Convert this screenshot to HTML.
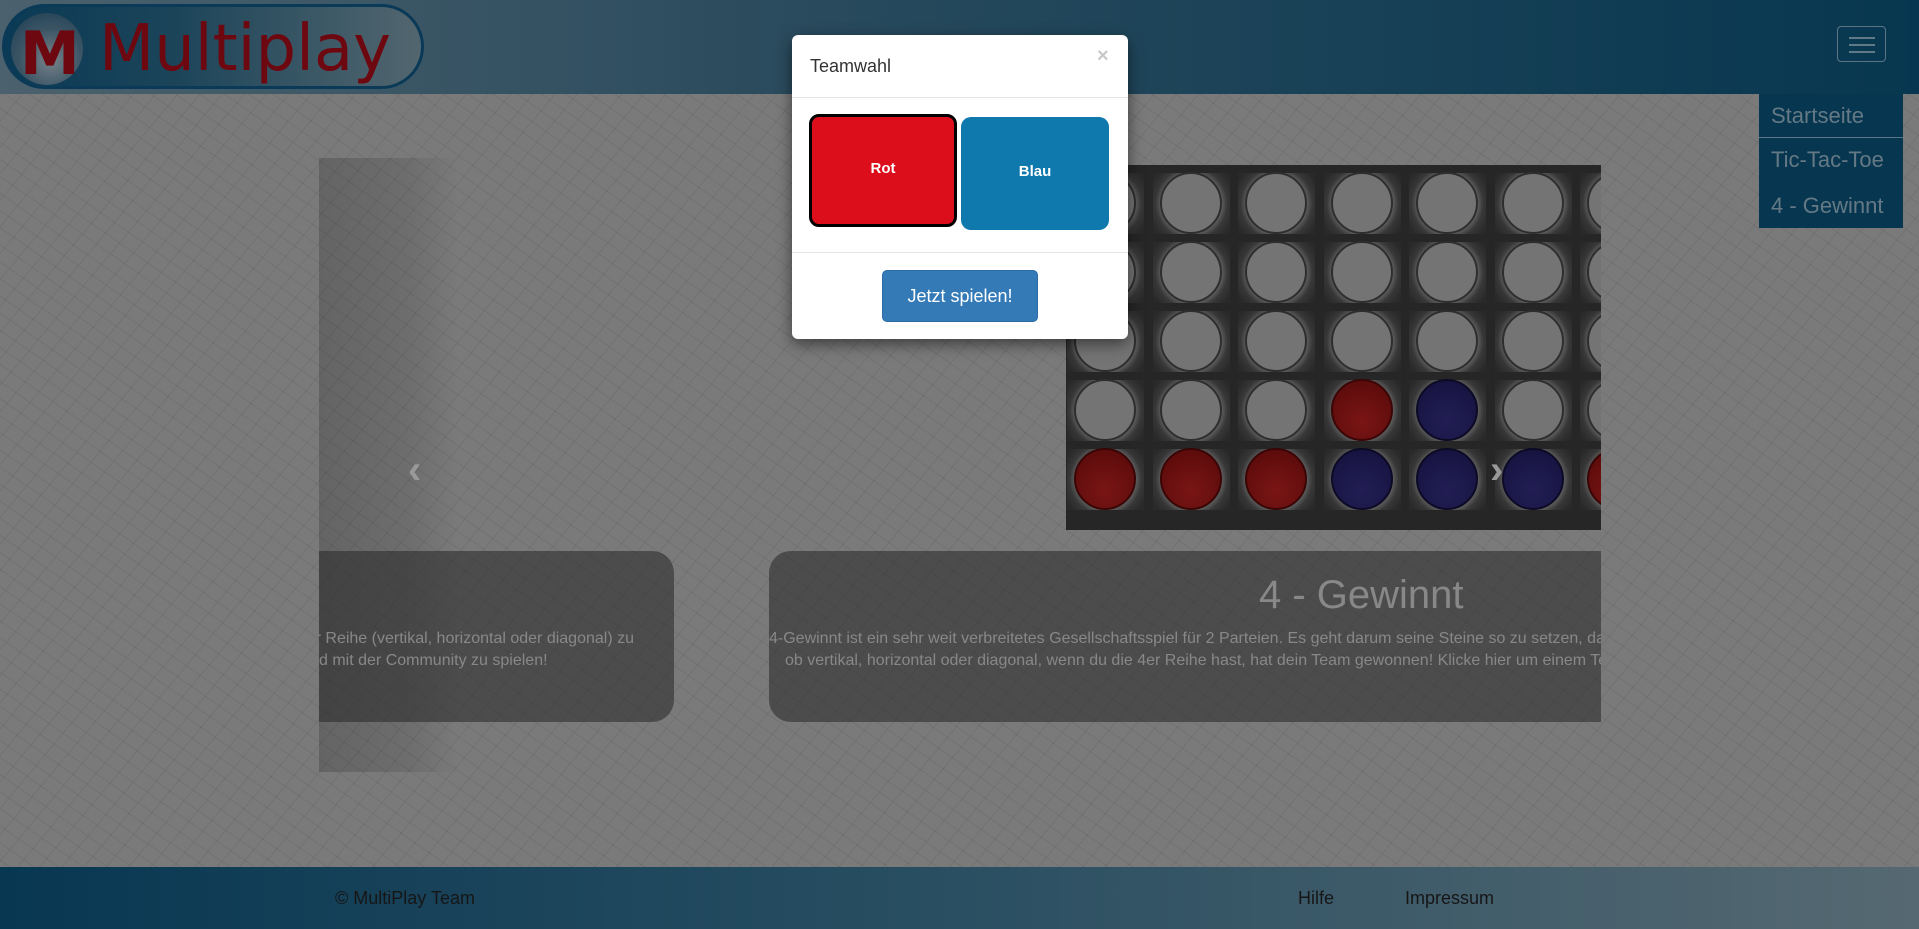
<!DOCTYPE html>
<html><head><meta charset="utf-8"><style>
*{margin:0;padding:0;box-sizing:border-box}
body{width:1919px;height:929px;overflow:hidden;position:relative;font-family:"Liberation Sans",Arial,sans-serif;background:#7a7a7a;
background-image:repeating-linear-gradient(35deg,rgba(0,0,0,.07) 0 1px,transparent 1px 14px),repeating-linear-gradient(-50deg,rgba(0,0,0,.07) 0 1px,transparent 1px 17px);}
.a{position:absolute}
#hdr{left:0;top:0;width:1919px;height:94px;background:linear-gradient(90deg,#4b616d 0%,#27495c 45%,#073750 100%)}
#logo{left:2px;top:4px;width:422px;height:85px;border:3px solid #0a3a57;border-radius:43px;background:linear-gradient(90deg,#0a3a55 0%,#1b4459 40%,#52666f 100%)}
#circ{left:6px;top:6px;width:72px;height:72px;border-radius:50%;background:radial-gradient(circle at 55% 65%,#76838a 0%,#3c5565 50%,#183a50 100%)}
#m{left:15px;top:12px;font:bold 60px "DejaVu Sans",sans-serif;color:#6e0810}
#mp{left:94px;top:0px;font:64px "DejaVu Sans",sans-serif;color:#6e0810;line-height:85px}
#ham{left:1837px;top:26px;width:49px;height:36px;border:1px solid #5a7584;border-radius:4px}
#ham i{position:absolute;left:11px;width:26px;height:2px;background:#5f7987}
#nav{left:1759px;top:94px;width:144px;height:134px;background:#073750}
#nav div{position:absolute;left:12px;font-size:22px;color:#647985}
#ftr{left:0;top:867px;width:1919px;height:62px;background:linear-gradient(90deg,#083752 0%,#2a4f62 50%,#566972 100%);font-size:18px;color:#161616}
.cap{background:rgba(45,45,45,.6);border-radius:22px}
.ct{color:#888;font-size:16px;white-space:nowrap}
.cell{position:absolute;width:77px;height:61px;background:radial-gradient(circle,#7a7a7a 0,#5e5e5e 30px,#373737 36px,#292929 45px)}
.hole{position:absolute;width:62px;height:62px;border-radius:50%;border:2px solid #2e2e2e;background:#747474}
.red{background:radial-gradient(circle at 50% 70%,#7a1515,#560909);border-color:#3a0505}
.blue{background:radial-gradient(circle at 50% 70%,#221e55,#14113c);border-color:#0c0a25}
#modal{left:792px;top:35px;width:336px;height:304px;background:#fff;border-radius:6px;box-shadow:0 5px 15px rgba(0,0,0,.5)}
</style></head><body>
<div class="a" id="hdr"></div>
<div class="a" id="logo"><div class="a" id="circ"></div><div class="a" id="m">M</div><div class="a" id="mp">Multiplay</div></div>
<div class="a" id="ham"><i style="top:10px"></i><i style="top:17px"></i><i style="top:24px"></i></div>
<div class="a" id="nav"><div style="top:9px">Startseite</div><div style="top:43px;left:0;width:144px;height:1px;background:#5a7584"></div><div style="top:53px">Tic-Tac-Toe</div><div style="top:99px">4 - Gewinnt</div></div>

<div class="a" style="left:319px;top:158px;width:355px;height:614px;background:linear-gradient(90deg,rgba(0,0,0,.18) 0,rgba(0,0,0,.1) 90px,rgba(0,0,0,0) 140px)"></div>
<div class="a" style="left:1066px;top:165px;width:535px;height:365px;background:#262626;overflow:hidden" id="board"></div>

<div class="a cap" style="left:319px;top:551px;width:355px;height:171px;border-radius:0 22px 22px 0"></div>
<div class="a ct" style="left:319px;top:630px;width:315px;overflow:hidden;direction:rtl;text-align:right"><span style="direction:ltr;unicode-bidi:embed">er Reihe (vertikal, horizontal oder diagonal) zu</span></div>
<div class="a ct" style="left:319px;top:652px">d mit der Community zu spielen!</div>

<div class="a cap" style="left:769px;top:551px;width:832px;height:171px;border-radius:22px 0 0 22px"></div>
<div class="a" style="left:1259px;top:573px;font-size:40px;color:#888">4 - Gewinnt</div>
<div class="a ct" style="left:769px;top:630px;width:832px;overflow:hidden">4-Gewinnt ist ein sehr weit verbreitetes Gesellschaftsspiel für 2 Parteien. Es geht darum seine Steine so zu setzen, dass</div>
<div class="a ct" style="left:785px;top:652px;width:816px;overflow:hidden">ob vertikal, horizontal oder diagonal, wenn du die 4er Reihe hast, hat dein Team gewonnen! Klicke hier um einem Team</div>
<div class="a" style="left:408px;top:448px;font-size:40px;color:#999;font-weight:bold">‹</div>
<div class="a" style="left:1490px;top:448px;font-size:40px;color:#999;font-weight:bold">›</div>

<div class="a" id="ftr"><div class="a" style="left:335px;top:21px">© MultiPlay Team</div><div class="a" style="left:1298px;top:21px">Hilfe</div><div class="a" style="left:1405px;top:21px">Impressum</div></div>

<div class="a" id="modal">
<div class="a" style="left:18px;top:21px;font-size:18px;color:#333">Teamwahl</div>
<div class="a" style="left:305px;top:10px;font-size:20px;font-weight:bold;color:#c8c8c8">×</div>
<div class="a" style="left:0;top:62px;width:336px;height:1px;background:#e5e5e5"></div>
<div class="a" style="left:17px;top:79px;width:148px;height:113px;background:#dc0e1c;border:3px solid #000;border-radius:10px;color:#fff;font-weight:bold;font-size:15px;text-align:center;line-height:104px">Rot</div>
<div class="a" style="left:169px;top:82px;width:148px;height:113px;background:#0f78ad;border-radius:10px;color:#fff;font-weight:bold;font-size:15px;text-align:center;line-height:109px">Blau</div>
<div class="a" style="left:0;top:217px;width:336px;height:1px;background:#e5e5e5"></div>
<div class="a" style="left:90px;top:235px;width:156px;height:52px;background:#337ab7;border:1px solid #2e6da4;border-radius:5px;color:#fff;font-size:18px;text-align:center;line-height:50px">Jetzt spielen!</div>
</div>
<script>
var b=document.getElementById('board'),h='';
var pieces={'3_3':'red','3_4':'blue','4_0':'red','4_1':'red','4_2':'red','4_3':'blue','4_4':'blue','4_5':'blue','4_6':'red'};
for(var r=0;r<5;r++)for(var c=0;c<7;c++){
var cx=1105+c*85.5-1066,cy=203+r*69-165;
h+='<div class="cell" style="left:'+(cx-38)+'px;top:'+(cy-30)+'px"></div>';
h+='<div class="hole '+(pieces[r+'_'+c]||'')+'" style="left:'+(cx-31)+'px;top:'+(cy-31)+'px"></div>';}
b.innerHTML=h;
</script>
</body></html>
